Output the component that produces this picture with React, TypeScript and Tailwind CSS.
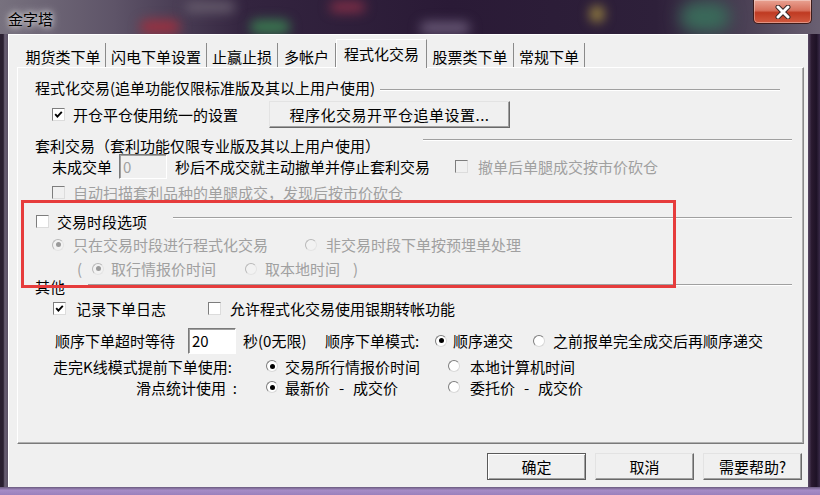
import React from 'react';

const GRAY = 'text-[#a0a0a0]';

function CheckBox({ checked, disabled }: { checked?: boolean; disabled?: boolean }) {
  return (
    <span
      className={`flex h-[13px] w-[13px] shrink-0 items-center justify-center border border-t-[#7d7d7d] border-l-[#7d7d7d] border-b-[#dcdcdc] border-r-[#dcdcdc] ${
        disabled ? 'bg-[#f0f0f0]' : 'bg-white'
      }`}
    >
      {checked && (
        <svg width="9" height="9" viewBox="0 0 9 9">
          <path d="M1.2 4.2 L3.4 6.6 L7.8 1.8" fill="none" stroke="#000" strokeWidth="1.9" />
        </svg>
      )}
    </span>
  );
}

function RadioDot({ checked, disabled }: { checked?: boolean; disabled?: boolean }) {
  return (
    <span
      className={`flex h-[12px] w-[12px] shrink-0 items-center justify-center rounded-full border ${
        disabled
          ? 'border-t-[#b8b8b8] border-l-[#b8b8b8] border-b-[#e4e4e4] border-r-[#e4e4e4] bg-[#f2f2f2]'
          : 'border-t-[#7d7d7d] border-l-[#7d7d7d] border-b-[#d8d8d8] border-r-[#d8d8d8] bg-white'
      }`}
    >
      {checked && (
        <span className={`h-[5px] w-[5px] rounded-full ${disabled ? 'bg-[#9a9a9a]' : 'bg-black'}`} />
      )}
    </span>
  );
}

function Rule({ className = '' }: { className?: string }) {
  return <div className={`h-[2px] flex-1 border-t border-b border-t-[#a0a0a0] border-b-white ${className}`} />;
}

function Tab({ label, w, active }: { label: string; w: string; active?: boolean }) {
  if (active) {
    return (
      <div
        className={`relative z-10 -mb-[1px] flex h-[29px] ${w} items-center justify-center border-l border-r border-t border-l-white border-t-white border-r-[#8a8a8a] bg-[#f0f0f0] pb-[1px]`}
      >
        {label}
      </div>
    );
  }
  return (
    <div className={`flex h-[24px] ${w} items-center justify-center border-r border-r-[#8a8a8a] pt-[3px]`}>
      {label}
    </div>
  );
}

function Btn({ label, def, className = '' }: { label: string; def?: boolean; className?: string }) {
  return (
    <div
      className={`flex items-center justify-center border bg-[#f0f0f0] ${
        def
          ? 'border-[#5a5a5a] shadow-[inset_1px_1px_0_#fff,inset_-1px_-1px_0_#a0a0a0]'
          : 'border-t-[#e3e3e3] border-l-[#e3e3e3] border-b-[#696969] border-r-[#696969] shadow-[inset_-1px_-1px_0_#a0a0a0]'
      } ${className}`}
    >
      {label}
    </div>
  );
}

// "最新价 - 成交价" style label, with the wide dash of the original font
function PriceDiff({ a, b }: { a: string; b: string }) {
  return (
    <span className="flex items-center">
      {a}
      <span className="w-[23px] text-center">-</span>
      {b}
    </span>
  );
}

export default function App() {
  return (
    <div className="relative flex h-[495px] w-[820px] flex-col overflow-hidden bg-[#2a1c34] font-['Noto_Sans_CJK_SC','Noto_Sans',sans-serif] text-[15px] leading-[15px] text-black">
      {/* title bar */}
      <div className="relative h-[34px] overflow-hidden bg-[linear-gradient(to_right,#77717e_0%,#5e5468_14%,#33243f_30%,#2a1a36_55%,#2e203a_80%,#4e4458_92%,#6a6072_100%)]">
        <div className="absolute left-[140px] top-[20px] h-[14px] w-[40px] rounded-full bg-[#9a3040] blur-[6px]" />
        <div className="absolute left-[250px] top-[20px] h-[14px] w-[40px] rounded-full bg-[#3a7a50] blur-[6px]" />
        <div className="absolute left-[185px] top-[2px] h-[10px] w-[50px] rounded-full bg-[#6a6070] blur-[6px]" />
        <div className="absolute left-[330px] top-[2px] h-[10px] w-[35px] rounded-full bg-[#8a3048] blur-[6px]" />
        <div className="absolute left-[420px] top-[22px] h-[12px] w-[50px] rounded-full bg-[#6a5a78] blur-[6px]" />
        <div className="absolute left-[590px] top-[6px] h-[16px] w-[14px] rounded-full bg-[#a08a40] blur-[6px]" />
        <div className="absolute left-[680px] top-[2px] h-[30px] w-[50px] rounded-full bg-[#3a6a5a] blur-[8px]" />
        <div className="absolute left-[8px] top-[11px] text-[15px] leading-[15px] [text-shadow:0_0_6px_#fff,0_0_10px_#ddd]">
          金字塔
        </div>
        <div className="absolute right-[8px] top-0 flex h-[24px] w-[59px] items-center justify-center rounded-b-[5px] border border-t-0 border-[#3c1c1c] bg-[linear-gradient(to_bottom,#e9a292_0%,#d7705c_45%,#bf3a22_55%,#d25a40_100%)] shadow-[inset_0_0_0_1px_rgba(255,255,255,0.35)]">
          <svg width="18" height="14" viewBox="0 0 18 14">
            <path d="M4 2 L14 12 M14 2 L4 12" stroke="#3a2a2a" strokeWidth="5" strokeLinecap="round" />
            <path d="M4 2 L14 12 M14 2 L4 12" stroke="#fff" strokeWidth="3" strokeLinecap="round" />
          </svg>
        </div>
      </div>

      {/* middle */}
      <div className="flex h-[453px]">
        <div className="w-[8px] bg-[linear-gradient(to_right,#2a2030_0%,#2a2030_40%,#6a6074_60%,#5a5064_100%)]" />
        <div className="flex w-[800px] flex-col bg-[#f0f0f0] pt-[6px] shadow-[inset_1px_1px_0_#fff]">
          {/* tabs */}
          <div className="flex h-[27px] items-end pl-[13px]">
            <Tab label="期货类下单" w="w-[85px]" />
            <Tab label="闪电下单设置" w="w-[101px]" />
            <Tab label="止赢止损" w="w-[71px]" />
            <Tab label="多帐户" w="w-[58px]" />
            <Tab label="程式化交易" w="w-[91px]" active />
            <Tab label="股票类下单" w="w-[87px]" />
            <Tab label="常规下单" w="w-[71px]" />
          </div>

          {/* panel */}
          <div className="ml-[9px] h-[377px] w-[787px] border border-t-white border-l-white border-r-[#8a8a8a] border-b-[#7a7a7a] pt-[7px] shadow-[inset_-1px_-1px_0_#b0b0b0]">
            <div className="flex h-[24px] items-center pl-[17px]">
              <span>程式化交易(追单功能仅限标准版及其以上用户使用)</span>
              <Rule className="ml-[5px] mr-[23px] mt-[6px]" />
            </div>

            <div className="flex h-[31px] items-center pl-[34px]">
              <div className="flex w-[217px] items-center">
                <CheckBox checked />
                <span className="ml-[8px]">开仓平仓使用统一的设置</span>
              </div>
              <Btn label="程序化交易开平仓追单设置..." className="h-[27px] w-[241px] tracking-[0.5px]" />
            </div>

            <div className="flex h-[30px] items-center pl-[17px]">
              <span>套利交易（套利功能仅限专业版及其以上用户使用）</span>
              <Rule className="mb-[10px] ml-[43px] mr-[11px]" />
            </div>

            <div className="flex h-[12px] items-center pl-[34px]">
              <span className="w-[67px]">未成交单</span>
              <div className="flex h-[25px] w-[48px] shrink-0 items-center border border-t-[#7a7a7a] border-l-[#7a7a7a] border-b-white border-r-white bg-[#f0f0f0] pl-[3px] text-[#a0a0a0] shadow-[inset_1px_1px_0_#a0a0a0]">
                0
              </div>
              <span className="ml-[8px] w-[280px]">秒后不成交就主动撤单并停止套利交易</span>
              <CheckBox disabled />
              <span className={`ml-[10px] ${GRAY}`}>撤单后单腿成交按市价砍仓</span>
            </div>

            <div className="flex h-[40px] items-center pl-[34px]">
              <CheckBox disabled />
              <span className={`ml-[8px] ${GRAY}`}>自动扫描套利品种的单腿成交，发现后按市价砍仓</span>
            </div>

            <div className="flex h-[18px] items-center pl-[18px]">
              <CheckBox />
              <span className="ml-[8px] w-[116px]">交易时段选项</span>
              <Rule className="mb-[6px] mr-[11px]" />
            </div>

            <div className="flex h-[29px] items-center pl-[34px]">
              <RadioDot checked disabled />
              <span className={`ml-[9px] w-[232px] ${GRAY}`}>只在交易时段进行程式化交易</span>
              <RadioDot disabled />
              <span className={`ml-[9px] ${GRAY}`}>非交易时段下单按预埋单处理</span>
            </div>

            <div className="flex h-[19px] items-center pl-[59px]">
              <span className={`w-[15px] ${GRAY}`}>(</span>
              <RadioDot checked disabled />
              <span className={`ml-[7px] w-[134px] ${GRAY}`}>取行情报价时间</span>
              <RadioDot disabled />
              <span className={`ml-[8px] w-[88px] ${GRAY}`}>取本地时间</span>
              <span className={GRAY}>)</span>
            </div>

            <div className="flex h-[16px] items-center pl-[17px]">
              <span className="w-[53px]">其他</span>
              <Rule className="mb-[2px] mr-[11px]" />
            </div>

            <div className="flex h-[28px] items-center pl-[35px]">
              <CheckBox checked />
              <span className="ml-[10px] w-[132px]">记录下单日志</span>
              <CheckBox />
              <span className="ml-[9px]">允许程式化交易使用银期转帐功能</span>
            </div>

            <div className="flex h-[37px] items-center pl-[37px]">
              <span className="w-[133px]">顺序下单超时等待</span>
              <div className="flex h-[26px] w-[48px] shrink-0 items-center border border-t-[#7a7a7a] border-l-[#7a7a7a] border-b-white border-r-white bg-white pl-[3px] shadow-[inset_1px_1px_0_#a0a0a0]">
                20
              </div>
              <span className="ml-[7px] w-[82px]">秒(0无限)</span>
              <span className="w-[110px]">顺序下单模式:</span>
              <RadioDot checked />
              <span className="ml-[6px] w-[80px]">顺序递交</span>
              <RadioDot />
              <span className="ml-[8px]">之前报单完全成交后再顺序递交</span>
            </div>

            <div className="flex h-[14px] items-center pl-[35px]">
              <span className="w-[213px]">走完K线模式提前下单使用:</span>
              <RadioDot checked />
              <span className="ml-[7px] w-[163px]">交易所行情报价时间</span>
              <RadioDot />
              <span className="ml-[10px]">本地计算机时间</span>
            </div>

            <div className="flex h-[28px] items-center pl-[118px]">
              <span className="w-[130px] whitespace-pre">滑点统计使用  :</span>
              <RadioDot checked />
              <span className="ml-[7px] w-[163px]">
                <PriceDiff a="最新价" b="成交价" />
              </span>
              <RadioDot />
              <span className="ml-[10px]">
                <PriceDiff a="委托价" b="成交价" />
              </span>
            </div>
          </div>

          {/* buttons */}
          <div className="mt-[9px] flex justify-end gap-[9px] pr-[6px]">
            <Btn label="确定" def className="h-[27px] w-[99px]" />
            <Btn label="取消" className="h-[27px] w-[99px]" />
            <Btn label="需要帮助?" className="h-[27px] w-[99px]" />
          </div>
        </div>
        <div className="w-[12px] bg-[linear-gradient(to_right,#5a4a66_0%,#2a1a30_30%,#1e1226_70%,#3a2a48_100%)]" />
      </div>
      <div className="h-[8px] bg-[linear-gradient(to_bottom,#6a5a7e,#a68cc6_40%,#9a80bc)]" />

      {/* annotation box */}
      <div className="pointer-events-none absolute left-[21px] top-[200px] h-[88px] w-[655px] border-[3px] border-[#e63c3c]" />
    </div>
  );
}
